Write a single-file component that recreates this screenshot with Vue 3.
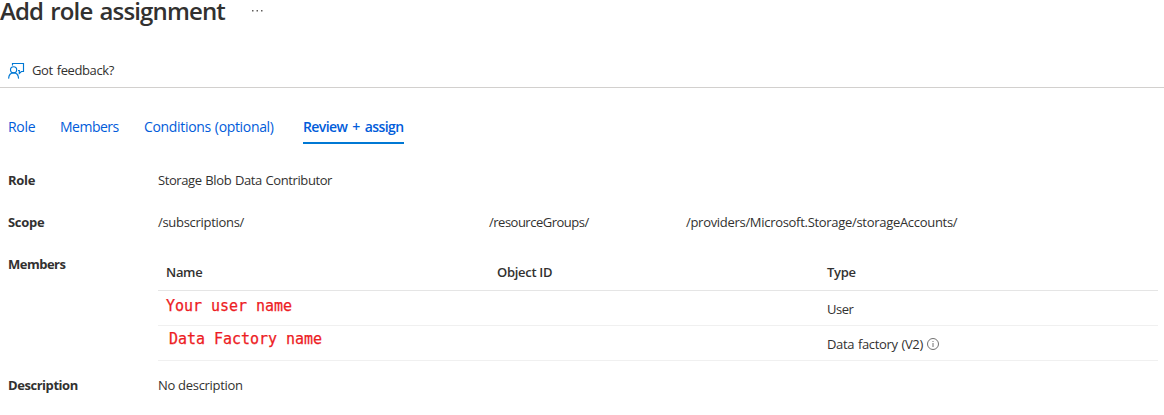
<script setup>
const tabs = [
  { label: 'Role', cls: 't-role' },
  { label: 'Members', cls: 't-members' },
  { label: 'Conditions (optional)', cls: 't-cond' },
  { label: 'Review + assign', cls: 't-review active' },
]
</script>

<template>
  <main class="page">
    <header class="title-bar">
      <h1>Add role assignment</h1>
      <svg class="more" width="13" height="3" viewBox="0 0 13 3" fill="#605e5c">
        <rect x="1" y="1" width="1.5" height="1.5" /><rect x="5.5" y="1" width="1.5" height="1.5" /><rect x="10" y="1" width="1.5" height="1.5" />
      </svg>
    </header>
    <div class="toolbar">
      <svg width="17" height="17" viewBox="0 0 17 17" fill="none" stroke="#0078d4" stroke-width="1.15">
        <path d="M4.5 3.5V1.5H15.5V9.5H13.4L11.3 11.4V8.5H10" />
        <circle cx="5.6" cy="7.8" r="3.1" />
        <path d="M.6 16.6C.8 13.2 2.8 10.9 5.6 10.9S10.4 13.2 10.6 16.6" />
      </svg>
      <span class="feedback">Got feedback?</span>
    </div>
    <nav class="tabs">
      <a v-for="t in tabs" :key="t.label" class="tab" :class="t.cls">{{ t.label }}</a>
    </nav>
    <dl class="details">
      <div class="row"><dt>Role</dt><dd class="v-role">Storage Blob Data Contributor</dd></div>
      <div class="row">
        <dt>Scope</dt>
        <dd class="scope"><span>/subscriptions/</span><span class="groups">/resourceGroups/</span><span class="providers">/providers/Microsoft.Storage/storageAccounts/</span></dd>
      </div>
      <div class="row members">
        <dt class="k-members">Members</dt>
        <dd class="table">
          <div class="tr th"><span>Name</span><span>Object ID</span><span>Type</span></div>
          <div class="tr"><span class="red">Your user name</span><span></span><span class="user">User</span></div>
          <div class="tr">
            <span class="red second">Data Factory name</span><span></span>
            <span class="factory"><span>Data factory (V2)</span>
              <svg width="12" height="12" viewBox="0 0 12 12"><circle cx="6" cy="6" r="5.5" fill="none" stroke="#707070" /><path d="M6 5V9M6 3V4" stroke="#707070" /></svg>
            </span>
          </div>
        </dd>
      </div>
      <div class="row"><dt class="k-desc">Description</dt><dd class="v-desc">No description</dd></div>
    </dl>
  </main>
</template>

<style>
body { margin: 0; background: #fff; }
</style>
<style scoped>
.page { width: 1164px; height: 415px; overflow: hidden; background: #fff; color: #323130; font: 13px/20px "Open Sans", "Noto Sans", sans-serif; white-space: nowrap; letter-spacing: -.3px; }
.title-bar { display: flex; height: 53px; }
h1 { margin: 0; width: 251px; height: 22px; font-size: 24px; line-height: 22px; font-weight: 600; letter-spacing: -.85px; word-spacing: 1.7px; }
.more { margin-top: 9px; }
.toolbar { display: flex; height: 34px; padding-left: 8px; align-items: center; border-bottom: 1px solid #d2d0ce; }
.toolbar svg { width: 17px; height: 17px; margin-right: 7px; }
.feedback { letter-spacing: -.4px; word-spacing: 1px; }
.tabs { display: flex; height: 56px; padding: 29px 0 0 8px; box-sizing: border-box; color: #015cda; font-size: 14px; }
.tab { height: 25px; border-bottom: 2px solid transparent; box-sizing: content-box; }
.t-role { width: 52px; }
.t-members { width: 84px; letter-spacing: -.5px; }
.t-cond { width: 159px; letter-spacing: -.33px; word-spacing: .7px; }
.t-review { width: 101px; letter-spacing: -.6px; word-spacing: 2px; }
.active { font-weight: 600; border-color: #0078d4; }
.details { margin: 0; padding: 26px 6px 0 8px; }
.row { display: flex; height: 42px; }
dt { width: 150px; font-weight: 700; flex: none; }
dd { margin: 0; flex: 1; }
.k-members { letter-spacing: -.5px; }
.k-desc { letter-spacing: -.45px; }
.v-role { letter-spacing: -.41px; word-spacing: .8px; }
.scope { display: grid; grid-template-columns: 331px 197px 1fr; }
.groups { letter-spacing: -.5px; }
.members { height: 121px; }
.tr { display: grid; grid-template-columns: 331px 330px 1fr; padding-left: 8px; height: 34px; line-height: 36px; border-bottom: 1px solid #f0f0f0; }
.th { height: 36px; font-weight: 600; border-color: #e5e5e5; }
.red { color: #ed1c24; font: 15px/31px "DejaVu Sans Mono", monospace; letter-spacing: -.03px; -webkit-text-stroke: .25px #ed1c24; }
.second { padding-left: 3px; line-height: 27px; }
.user { letter-spacing: -.5px; }
.factory { display: flex; align-items: center; gap: 4px; letter-spacing: -.35px; word-spacing: .8px; }
</style>
